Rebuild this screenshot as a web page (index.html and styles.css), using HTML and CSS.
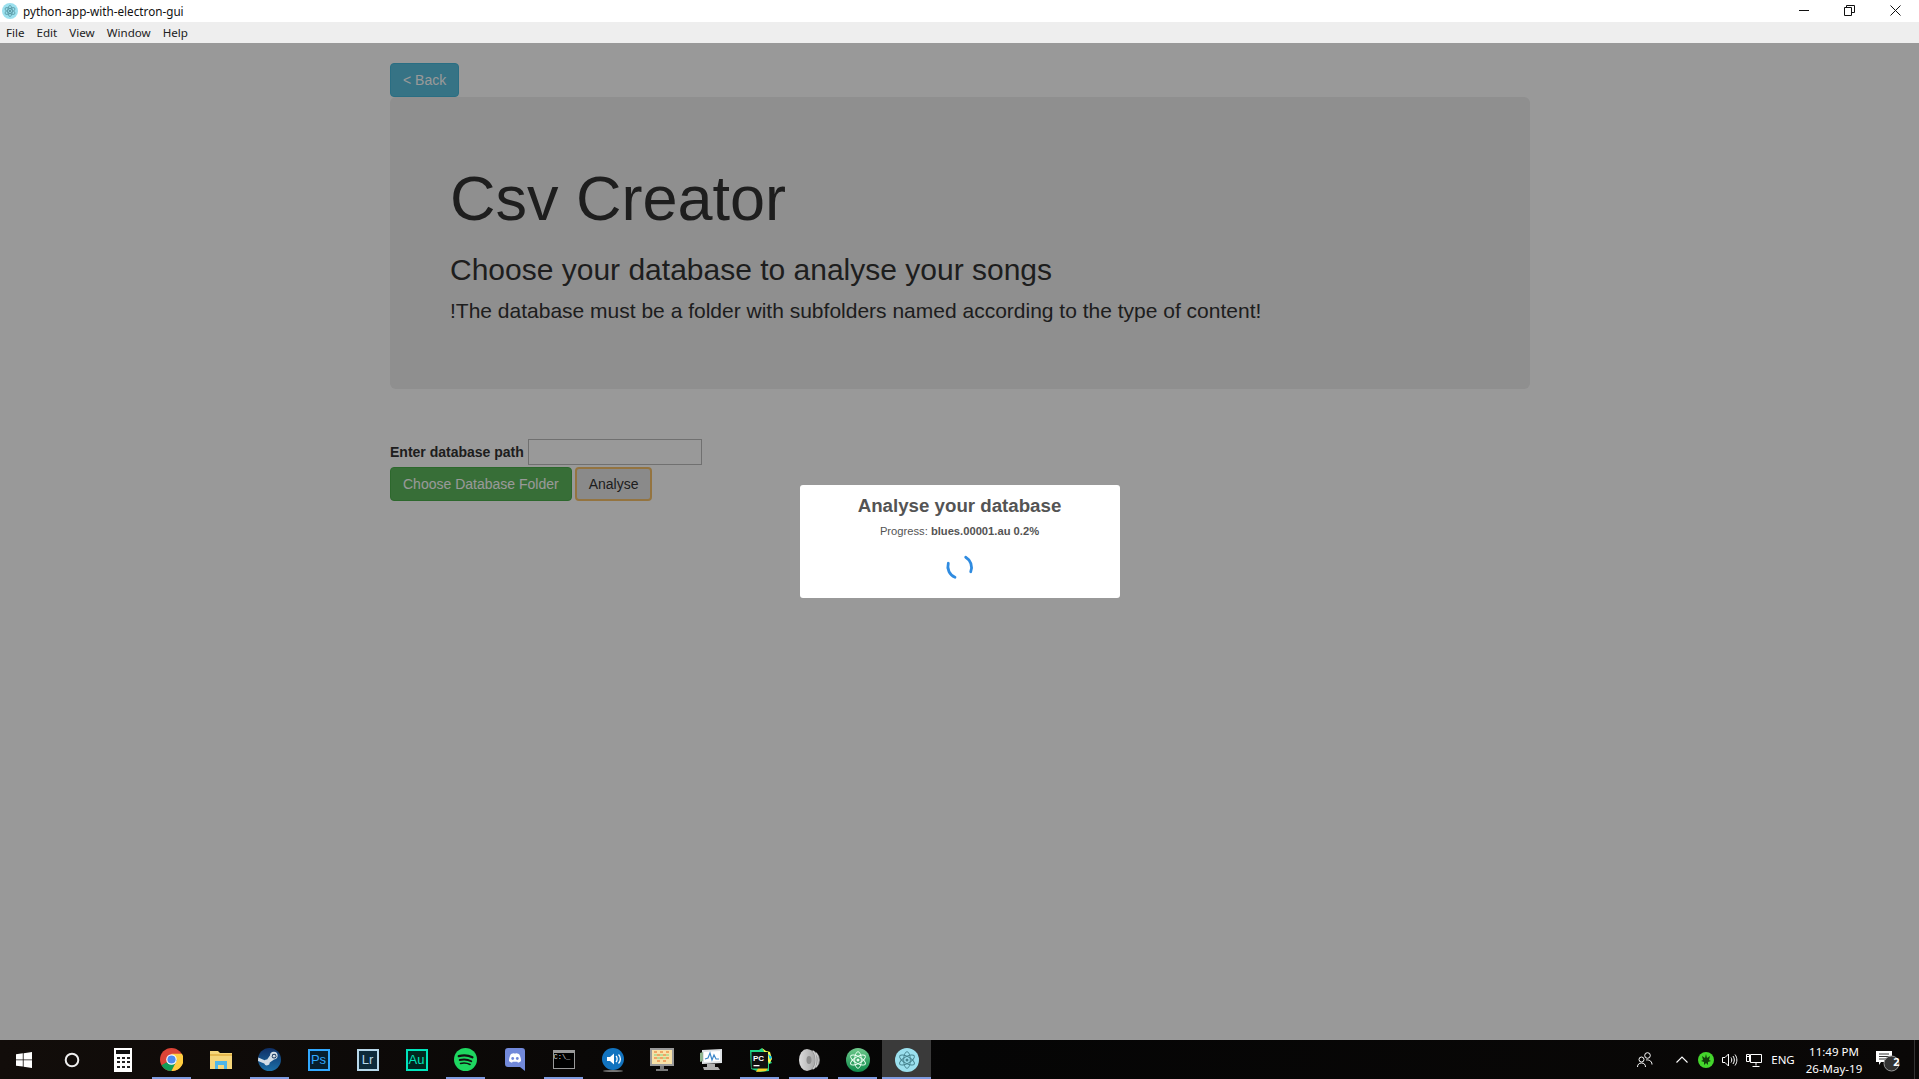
FILE: index.html
```html
<!DOCTYPE html>
<html lang="en">

<head>
	<meta charset="UTF-8">
	<title>python-app-with-electron-gui</title>
	<link rel="stylesheet" href="styles.css">
</head>

<body>
	<svg class="defs" width="0" height="0">
		<symbol id="atom" viewBox="0 0 24 24">
			<g fill="none" stroke-width="1.1">
				<ellipse cx="12" cy="12" rx="10" ry="4" transform="rotate(30 12 12)" />
				<ellipse cx="12" cy="12" rx="10" ry="4" transform="rotate(-30 12 12)" />
				<ellipse cx="12" cy="12" rx="10" ry="4" transform="rotate(90 12 12)" />
			</g>
			<circle cx="12" cy="12" r="1.8" stroke="none" fill="currentColor" />
		</symbol>
	</svg>

	<header class="titlebar">
		<div class="app-title">
			<svg class="app-icon" width="16" height="16" viewBox="0 0 24 24">
				<circle cx="12" cy="12" r="12" fill="#9be0ee" />
				<use href="#atom" x="2" y="2" width="20" height="20" stroke="#47848f" color="#47848f" />
			</svg>
			python-app-with-electron-gui
		</div>
		<div class="win-controls">
			<span class="win-btn"><svg width="11" height="11" viewBox="0 0 11 11"><path d="M0 5.500h10" stroke="#111" /></svg></span>
			<span class="win-btn win-restore"><svg width="11" height="11" viewBox="0 0 11 11"><path d="M.5 2.500h7v8h-7zM2.500 2.500v-2h8v7h-3" fill="none" stroke="#111" /></svg></span>
			<span class="win-btn win-close"><svg width="11" height="11" viewBox="0 0 11 11"><path d="M.5.500l10 10M10.500.500l-10 10" stroke="#111" /></svg></span>
		</div>
	</header>

	<nav class="menubar">
		<span>File</span>
		<span>Edit</span>
		<span>View</span>
		<span>Window</span>
		<span>Help</span>
	</nav>

	<main class="page">
		<div class="container">
			<button class="btn btn-info" type="button">&lt; Back</button>
			<section class="jumbotron">
				<h1>Csv Creator</h1>
				<h2>Choose your database to analyse your songs</h2>
				<p>!The database must be a folder with subfolders named according to the type of content!</p>
			</section>
			<div class="path-row">
				<label for="path">Enter database path</label>
				<input type="text" id="path">
			</div>
			<div class="actions">
				<button class="btn btn-success" type="button">Choose Database Folder</button>
				<button class="btn btn-analyse" type="button">Analyse</button>
			</div>
		</div>

		<div class="overlay">
			<div class="modal">
				<h3>Analyse your database</h3>
				<div class="progress">Progress: <b>blues.00001.au 0.2%</b></div>
				<svg class="spinner" width="30" height="30" viewBox="0 0 30 30">
					<path d="M3.300 11.300A11.700 11.700 0 0 0 10 25.300M20.700 5.300A11.700 11.700 0 0 1 25.700 19.700" fill="none" stroke="#2f8be0" stroke-width="2.800" stroke-linecap="round" />
				</svg>
			</div>
		</div>
	</main>

	<footer class="taskbar">
		<div class="task task-start">
			<svg width="16" height="16" viewBox="0 0 16 16"><path d="M0 2.300l6.800-1v6.200H0zM7.600 1.200L16 0v7.500H7.600zM0 8.300h6.800v6.300L0 13.700zM7.600 8.300H16V16l-8.400-1.200z" fill="#fff" /></svg>
		</div>
		<div class="task task-search">
			<svg width="16" height="16" viewBox="0 0 16 16"><circle cx="8" cy="8" r="6.300" fill="none" stroke="#eee" stroke-width="2" /></svg>
		</div>
		<div class="task">
			<svg width="18" height="24" viewBox="0 0 18 24">
				<rect width="18" height="24" fill="#fff" />
				<rect x="2" y="2" width="14" height="4" fill="#111" />
				<path d="M3 9h3v2H3zM8 9h3v2H8zM13 9h3v2h-3zM3 13h3v2H3zM8 13h3v2H8zM13 13h3v2h-3zM3 18h3v2H3zM8 18h3v2H8zM13 18h3v2h-3z" fill="#222" />
			</svg>
		</div>
		<div class="task running">
			<svg width="23" height="23" viewBox="0 0 24 24">
				<circle cx="12" cy="12" r="12" fill="#db4437" />
				<path d="M12 12L1.600 18A12 12 0 0 0 12 24L18.500 12z" fill="#0f9d58" />
				<path d="M12 6h10.900A12 12 0 0 1 12 24L18 12z" fill="#ffcd40" />
				<circle cx="12" cy="12" r="5.500" fill="#fff" />
				<circle cx="12" cy="12" r="4.300" fill="#4d8bf0" />
			</svg>
		</div>
		<div class="task">
			<svg width="22" height="20" viewBox="0 0 22 20">
				<path d="M0 1h8l2 2h12v16H0z" fill="#f6d67a" />
				<path d="M0 4h22v2H0z" fill="#e6b94f" />
				<path d="M5 19v-8h12v8h-3v-4H8v4z" fill="#4fb6e8" />
			</svg>
		</div>
		<div class="task running">
			<svg width="23" height="23" viewBox="0 0 24 24">
				<defs>
					<linearGradient id="steam" x1="0" y1="0" x2="0" y2="1"><stop offset="0" stop-color="#0f2f66" /><stop offset="1" stop-color="#1b6fa8" /></linearGradient>
				</defs>
				<circle cx="12" cy="12" r="12" fill="url(#steam)" />
				<path d="M0 13.500l6.500 2.700a3 3 0 0 0 5.800-1.200l4.500-3a4 4 0 1 0-4.300-4.300l-3 4.300a3 3 0 0 0-2.600.800L.3 10z" fill="#d3dde6" />
				<circle cx="16.800" cy="8.500" r="2.400" fill="#12315a" />
				<circle cx="16.800" cy="8.500" r="1.500" fill="#d3dde6" />
			</svg>
		</div>
		<div class="task"><span class="adobe adobe-ps">Ps</span></div>
		<div class="task"><span class="adobe adobe-lr">Lr</span></div>
		<div class="task"><span class="adobe adobe-au">Au</span></div>
		<div class="task running">
			<svg width="23" height="23" viewBox="0 0 24 24">
				<circle cx="12" cy="12" r="12" fill="#1ed760" />
				<g fill="none" stroke="#111" stroke-linecap="round">
					<path d="M5 8.500c5-1.300 10-.9 14.200 1.200" stroke-width="2.400" />
					<path d="M6 12.500c4.200-1 8.500-.6 12 1.300" stroke-width="2" />
					<path d="M6.800 16.100c3.600-.8 7-.5 10 1.100" stroke-width="1.600" />
				</g>
			</svg>
		</div>
		<div class="task">
			<svg width="20" height="23" viewBox="0 0 20 23">
				<path d="M3 0h14a3 3 0 0 1 3 3v20l-5-4H3a3 3 0 0 1-3-3V3a3 3 0 0 1 3-3z" fill="#7289da" />
				<path d="M4 13c0-3 1-5.500 2-7 2-1 3-1 3.200-.6h1.600C11 5 12 5 14 6c1 1.500 2 4 2 7-1 1.300-2.500 1.700-3 1.700l-.7-1h-4.600l-.7 1C6.500 14.700 5 14.300 4 13z" fill="#fff" />
				<circle cx="7.700" cy="10.500" r="1.400" fill="#7289da" />
				<circle cx="12.300" cy="10.500" r="1.400" fill="#7289da" />
			</svg>
		</div>
		<div class="task running">
			<span class="cmd"><span class="cmd-text">C:\_</span></span>
		</div>
		<div class="task">
			<svg width="22" height="24" viewBox="0 0 22 24">
				<ellipse cx="11" cy="23" rx="10" ry="1" fill="#777" />
				<circle cx="11" cy="11" r="11" fill="#1273bf" />
				<path d="M5 9h3l4-3.500v11L8 13H5z" fill="#fff" />
				<path d="M14 8c1.500 1.500 1.500 4.500 0 6M16.500 6.500c2.500 2.500 2.500 6.500 0 9" fill="none" stroke="#fff" stroke-width="1.300" />
			</svg>
		</div>
		<div class="task">
			<svg width="24" height="24" viewBox="0 0 24 24">
				<rect width="24" height="18" fill="#9a9a9a" />
				<rect x="2" y="2" width="20" height="14" fill="#f8e2a8" />
				<path d="M4 3h3v2H4zM10 3h3v2h-3zM16 3h3v2h-3zM7 6h3v2H7zM13 6h3v2h-3zM4 9h3v2H4zM10 9h3v2h-3zM16 9h3v2h-3zM7 12h3v2H7zM13 12h3v2h-3z" fill="#f0a565" />
				<path d="M4 6h3v2H4zM10 6h3v2h-3zM16 6h3v2h-3zM7 9h3v2H7zM13 9h3v2h-3z" fill="#b9dc94" />
				<path d="M10 18h4v3h-4zM6 21h12v2H6z" fill="#7a7a7a" />
			</svg>
		</div>
		<div class="task">
			<svg width="24" height="24" viewBox="0 0 24 24">
				<path d="M3 2l20-1v14L3 16z" fill="#dfe3e6" />
				<path d="M5 4l16-1v10L5 14z" fill="#fff" />
				<path d="M6 11l3-1 2-5 2 7 2-5 2 4 3 0" fill="none" stroke="#3b86c9" stroke-width="1.200" />
				<path d="M1 5l3-1v9l-3 1z" fill="#8fb58f" />
				<path d="M8 16h8v3H8zM4 19h15l2 3H5z" fill="#b0b0b0" />
			</svg>
		</div>
		<div class="task running">
			<svg width="24" height="24" viewBox="0 0 24 24">
				<path d="M2 2l9 0 3-2 2 3 6 1-1 7 3 4-3 1 0 7-9 1-9-3z" fill="#21d789" />
				<path d="M14 0l4 3 4 1 2 7-3 5-3-9z" fill="#fcf84a" />
				<path d="M20 20l-2 3-10 1 4-7z" fill="#f5d327" />
				<path d="M20 6l4 3-2 3z" fill="#07c3f2" />
				<rect x="3.500" y="4" width="16.500" height="16.500" fill="#111" />
				<text class="pc-text" x="5" y="12.500">PC</text>
				<path d="M5.500 17h6v1.300h-6z" fill="#fff" />
			</svg>
		</div>
		<div class="task running">
			<svg width="22" height="24" viewBox="0 0 22 24">
				<defs>
					<linearGradient id="cone" x1="0" x2="1"><stop offset="0" stop-color="#dcdcdc" /><stop offset="1" stop-color="#a8a8a8" /></linearGradient>
				</defs>
				<ellipse cx="12" cy="12" rx="10" ry="10" fill="#8a8a8a" />
				<path d="M15 3c4 4 4 14 0 18M18 5c3 4 3 10 0 14" fill="none" stroke="#cfcfcf" stroke-width="1.300" />
				<ellipse cx="9" cy="12" rx="8" ry="11" fill="url(#cone)" />
				<ellipse cx="11" cy="12" rx="2.500" ry="4" fill="#8d8d8d" />
			</svg>
		</div>
		<div class="task running">
			<svg width="24" height="24" viewBox="0 0 24 24">
				<defs>
					<linearGradient id="atomgreen" x1="0" y1="0" x2="0" y2="1"><stop offset="0" stop-color="#6fc98c" /><stop offset="1" stop-color="#0d8a4a" /></linearGradient>
				</defs>
				<circle cx="12" cy="12" r="12" fill="url(#atomgreen)" />
				<use href="#atom" x="2" y="2" width="20" height="20" stroke="#eafff1" color="#eafff1" />
			</svg>
		</div>
		<div class="task running task-active">
			<svg width="24" height="24" viewBox="0 0 24 24">
				<circle cx="12" cy="12" r="12" fill="#9be0ee" />
				<use href="#atom" x="2" y="2" width="20" height="20" stroke="#47848f" color="#47848f" />
			</svg>
		</div>

		<div class="tray">
			<span class="tray-item tray-people">
				<svg width="16" height="16" viewBox="0 0 16 16" fill="none" stroke="#fff"><circle cx="10.500" cy="3.500" r="2.800" /><circle cx="4.500" cy="7.500" r="2.500" /><path d="M.5 15c0-2.500 1.500-4 4-4s4 1.500 4 4M9 8c2-.5 6 .5 6 4.500" /></svg>
			</span>
			<span class="tray-item tray-chevron">
				<svg width="12" height="7" viewBox="0 0 12 7"><path d="M.5 6.500L6 1l5.500 5.500" fill="none" stroke="#fff" stroke-width="1.100" /></svg>
			</span>
			<span class="tray-item">
				<svg width="16" height="16" viewBox="0 0 16 16">
					<circle cx="8" cy="8" r="8" fill="#44d62c" />
					<path d="M8 2l1 4 3-2-1 4 2 1-3 1 0 3-2-2-2 2 0-3-3-1 2-1-1-4 3 2z" fill="#123d0c" />
				</svg>
			</span>
			<span class="tray-item tray-sound">
				<svg width="16" height="14" viewBox="0 0 16 14" fill="none" stroke="#fff"><path d="M.5 4.500h2.500L6.500 1v12L3 9.500H.5zM9 4.500c1 1.500 1 3.500 0 5M11 3c1.800 2.500 1.800 5.500 0 8M13 1.500c2.500 3.500 2.500 7.500 0 11" /></svg>
			</span>
			<span class="tray-item tray-net">
				<svg width="16" height="14" viewBox="0 0 16 14" fill="none" stroke="#fff"><path d="M4.500 1.500h11v8h-11M4.500 1.500v8M10 9.500v3M6.500 13.500h7" /><path d="M.5 1.500h3v7h-3zM.5 3.500h3" /></svg>
			</span>
			<span class="tray-item tray-lang">ENG</span>
			<span class="tray-item tray-clock">
				<span>11:49 PM</span>
				<span>26-May-19</span>
			</span>
			<span class="tray-item tray-notify">
				<svg width="24" height="24" viewBox="0 0 24 24">
					<path d="M0 3h16v11H5l-2 3v-3H0z" fill="#fff" />
					<path d="M3 6h10M3 8.500h10M3 11h7" stroke="#333" />
					<circle cx="15.500" cy="15.500" r="7.500" fill="#333" stroke="#999" />
				</svg>
				<span class="notify-count">2</span>
			</span>
			<span class="show-desktop"></span>
		</div>
	</footer>
</body>

</html>
```

FILE: styles.css
```css
* {
	box-sizing: border-box;
}

html,
body {
	height: 100%;
}

body {
	margin: 0;
	display: flex;
	flex-direction: column;
	height: 100vh;
	overflow: hidden;
	font-family: 'Liberation Sans', Arial, sans-serif;
	font-size: 14px;
	color: #333;
	background-color: #fff;
}

.defs {
	position: absolute;
}

.titlebar {
	display: flex;
	justify-content: space-between;
	align-items: center;
	height: 22px;
	flex: none;
	background-color: #fff;
	font-family: 'Noto Sans', sans-serif;
	font-size: 11.7px;
	color: #111;
}

.app-title {
	display: flex;
	align-items: center;
	padding-left: 2px;
}

.app-icon {
	margin-right: 5px;
}

.win-controls {
	display: flex;
	align-self: flex-start;
}

.win-btn {
	display: flex;
	justify-content: center;
	align-items: center;
	width: 45px;
	height: 20px;
}

.win-restore {
	width: 44px;
}

.win-close {
	width: 48px;
}

.menubar {
	display: flex;
	align-items: center;
	gap: 12px;
	height: 21px;
	flex: none;
	padding-left: 6px;
	background-color: #eee;
	font-family: 'Noto Sans', sans-serif;
	font-size: 11.600px;
	color: #222;
}

.page {
	position: relative;
	flex: 1;
	padding-left: 1px;
	background-color: #fff;
}

.container {
	width: 1140px;
	margin: 0 auto;
	padding-top: 20px;
}

.btn {
	display: block;
	height: 34px;
	padding: 6px 12px;
	border: 1px solid transparent;
	border-radius: 4px;
	font-family: inherit;
	font-size: 14px;
	line-height: 20px;
}

.btn-info {
	color: #fff;
	background-color: #5bc0de;
	border-color: #46b8da;
}

.btn-success {
	color: #fff;
	background-color: #5cb85c;
	border-color: #4cae4c;
}

.btn-analyse {
	padding: 5px 12px;
	color: #333;
	background-color: #e6e6e6;
	border: 2px solid #f7c26b;
}

.jumbotron {
	margin: 0 0 50px;
	padding: 48px 60px;
	background-color: #eee;
	border-radius: 6px;
}

h1 {
	margin: 19px 0 12px;
	font-size: 63px;
	font-weight: 500;
	line-height: 1.1;
}

h2 {
	margin: 20px 0 10px;
	font-size: 30px;
	font-weight: 500;
	line-height: 1.1;
}

.jumbotron p {
	margin: 0 0 15px;
	font-size: 21px;
	font-weight: 200;
	line-height: 30px;
}

.path-row {
	display: flex;
	align-items: center;
	gap: 4px;
	height: 26px;
}

label {
	font-weight: bold;
}

input[type="text"] {
	width: 174px;
	height: 26px;
	border: 1px solid #bbb;
	background-color: #fff;
}

.actions {
	display: flex;
	gap: 3px;
	margin-top: 2px;
}

.overlay {
	position: absolute;
	inset: 0;
	display: flex;
	justify-content: center;
	align-items: center;
	background-color: rgba(0, 0, 0, 0.4);
}

.modal {
	display: flex;
	flex-direction: column;
	align-items: center;
	width: 320px;
	height: 113px;
	padding-top: 9px;
	background-color: #fff;
	border-radius: 3px;
	color: #545454;
}

.modal h3 {
	margin: 0;
	font-size: 18.700px;
	line-height: 24px;
	font-weight: bold;
}

.progress {
	margin-top: 5px;
	font-size: 11.200px;
	line-height: 16px;
}

.spinner {
	margin-top: 13px;
}

.taskbar {
	display: flex;
	height: 39px;
	flex: none;
	background: linear-gradient(to right, #120d0a, #0a0807 30%, #050505 50%, #0a0807);
	color: #fff;
	font-family: 'Noto Sans', sans-serif;
}

.task {
	position: relative;
	display: flex;
	justify-content: center;
	align-items: center;
	width: 49px;
	height: 100%;
}

.task-start {
	width: 48px;
}

.task-search {
	width: 50px;
	padding-right: 2px;
}

.task.running::after {
	content: "";
	position: absolute;
	left: 5px;
	right: 5px;
	bottom: 0;
	height: 2px;
	background-color: #7e9be0;
}

.task-active {
	background-color: #3a3a3a;
}

.task-active.running::after {
	left: 0;
	right: 0;
}

.adobe {
	display: flex;
	justify-content: center;
	align-items: center;
	width: 22px;
	height: 22px;
	border: 2px solid;
	font-family: 'Liberation Sans', Arial, sans-serif;
	font-size: 13px;
}

.adobe-ps {
	color: #31a8ff;
	background-color: #061e2e;
}

.adobe-lr {
	color: #b8d8ea;
	background-color: #0e2a3a;
}

.adobe-au {
	color: #00e4bb;
	background-color: #00261f;
}

.cmd {
	display: block;
	width: 22px;
	height: 19px;
	border: 1px solid #999;
	border-top-width: 3px;
	background-color: #000;
	overflow: hidden;
}

.cmd-text {
	display: block;
	font-family: 'Liberation Mono', monospace;
	font-size: 7px;
	line-height: 8px;
	color: #ddd;
}

.pc-text {
	font-family: 'Liberation Sans', Arial, sans-serif;
	font-size: 8px;
	font-weight: bold;
	fill: #fff;
}

.tray {
	display: flex;
	height: 100%;
	margin-left: auto;
	font-size: 11.500px;
}

.tray-item {
	display: flex;
	justify-content: center;
	align-items: center;
	width: 24px;
}

.tray-people {
	width: 36px;
}

.tray-chevron {
	margin-left: 7px;
}

.tray-sound {
	width: 23px;
}

.tray-net {
	width: 26px;
}

.tray-lang {
	width: 32px;
}

.tray-clock {
	flex-direction: column;
	width: 70px;
	line-height: 17px;
}

.tray-notify {
	position: relative;
	width: 38px;
}

.notify-count {
	position: absolute;
	left: 20px;
	top: 14px;
	width: 15px;
	text-align: center;
	font-size: 11px;
	font-weight: bold;
	line-height: 15px;
}

.show-desktop {
	width: 8px;
	border-right: 1px solid #333;
	margin-right: 4px;
}
```
